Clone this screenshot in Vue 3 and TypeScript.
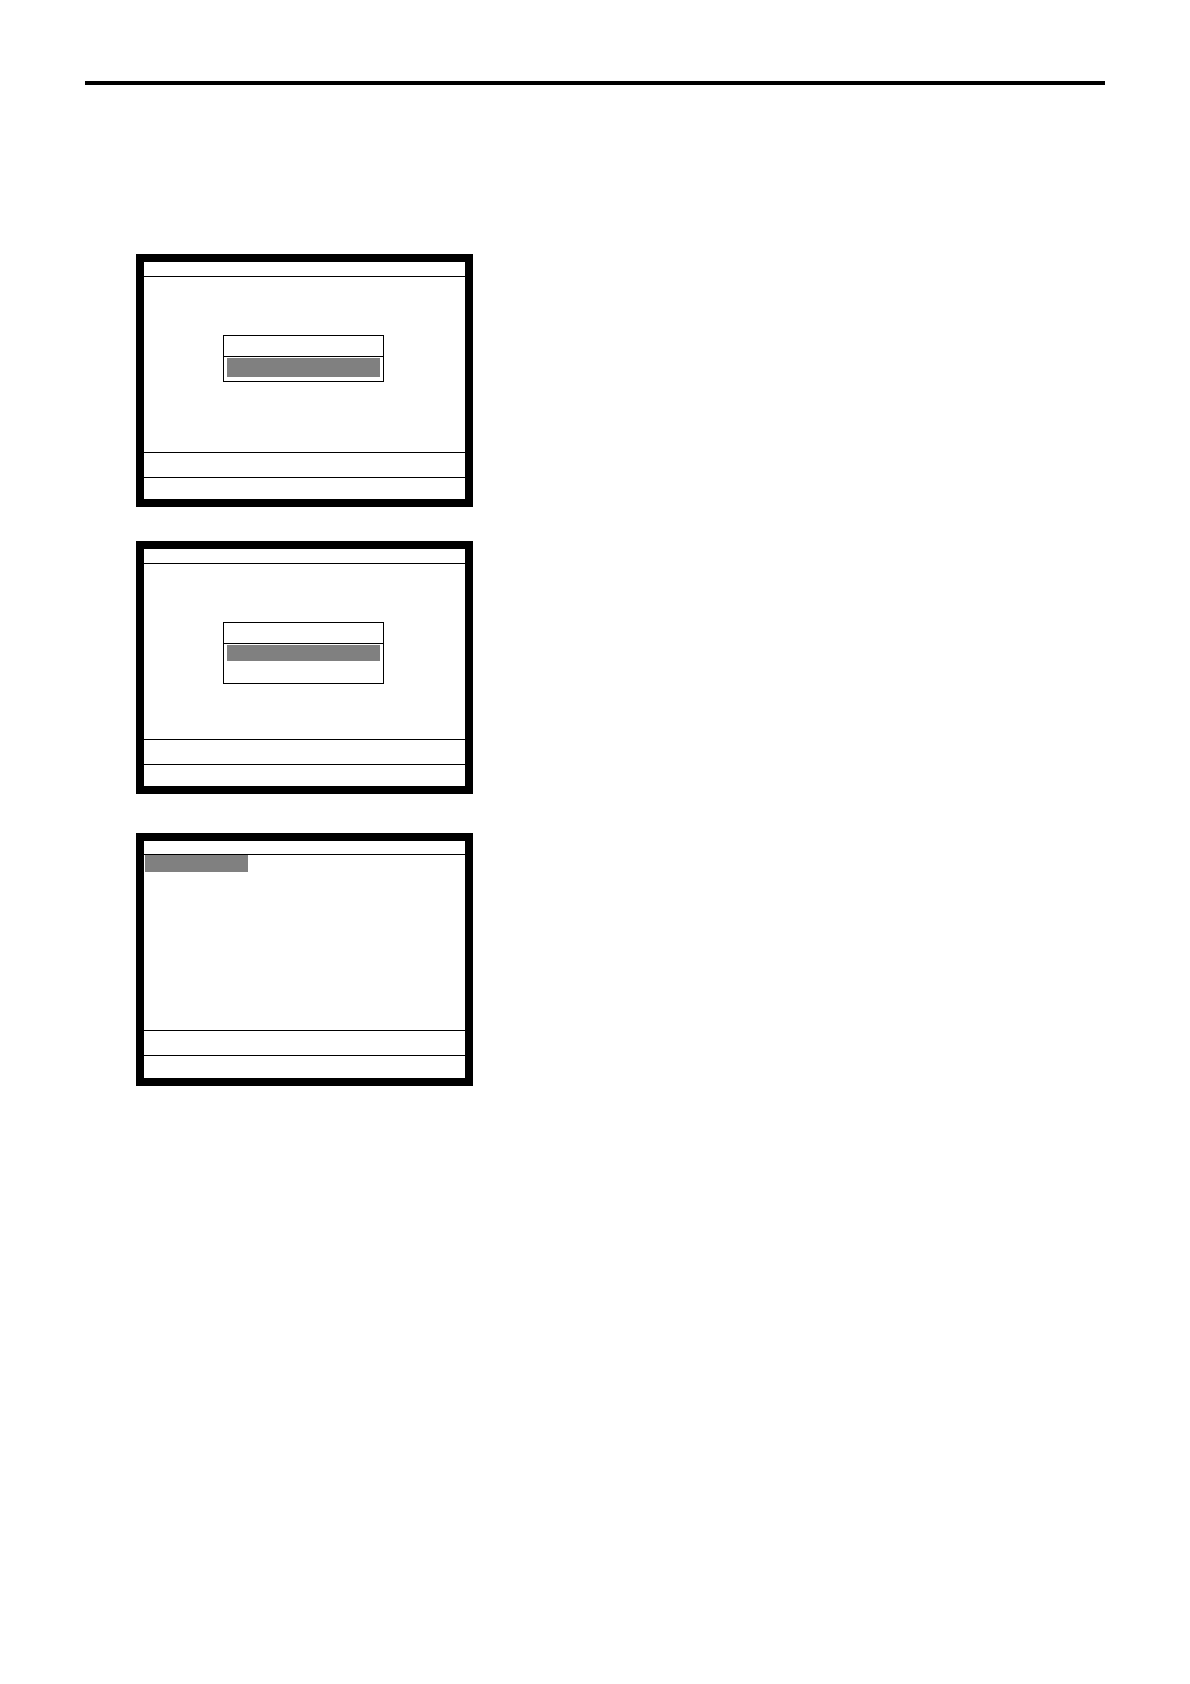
<script setup lang="ts">
interface Screen {
  id: string
  variant: 'single' | 'double' | 'list'
}

const screens: Screen[] = [
  { id: 'first', variant: 'single' },
  { id: 'second', variant: 'double' },
  { id: 'third', variant: 'list' },
]
</script>

<template>
  <main class="page">
    <hr class="rule" />
    <div class="screens">
      <section v-for="screen in screens" :key="screen.id" class="screen" :class="screen.variant">
        <header class="title"></header>
        <div class="body">
          <div v-if="screen.variant === 'list'" class="selection"></div>
          <div v-else class="menu">
            <div class="menu-title"></div>
            <div class="menu-items">
              <div class="selection"></div>
            </div>
          </div>
        </div>
        <div class="message"></div>
        <footer class="keys"></footer>
      </section>
    </div>
  </main>
</template>

<style>
body {
  margin: 0;
  background: #fff;
}
</style>

<style scoped>
.page,
.page * {
  box-sizing: border-box;
}

.page {
  min-height: 100vh;
  padding: 81px 85px 0;
  font-family: "Liberation Sans", Arial, sans-serif;
}

.rule {
  height: 4px;
  margin: 0;
  border: 0;
  background: #000;
}

.screens {
  display: flex;
  flex-direction: column;
  align-items: flex-start;
  gap: 34px;
  padding: 169px 0 0 51px;
}

.screen {
  display: flex;
  flex-direction: column;
  width: 100%;
  max-width: 337px;
  border: 8px solid #000;
}

.title {
  min-height: 15px;
  border-bottom: 1px solid #000;
}

.body {
  min-height: 175px;
  padding: 58px 81px 0 79px;
}

.message {
  min-height: 26px;
  border-top: 1px solid #000;
  border-bottom: 1px solid #000;
}

.keys {
  min-height: 21px;
}

.menu {
  border: 1px solid #000;
}

.menu-title {
  min-height: 21px;
  border-bottom: 1px solid #000;
}

.menu-items {
  padding: 1px 3px 4px;
}

.selection {
  min-height: 19px;
  background: #808080;
}

.double .menu-items {
  padding-bottom: 22px;
}

.double .selection {
  min-height: 16px;
}

.list {
  margin-top: 5px;
}

.list .title {
  min-height: 14px;
}

.list .body {
  padding: 0 1px;
}

.list .selection {
  width: 103px;
  min-height: 17px;
}

.list .keys {
  min-height: 22px;
}
</style>
